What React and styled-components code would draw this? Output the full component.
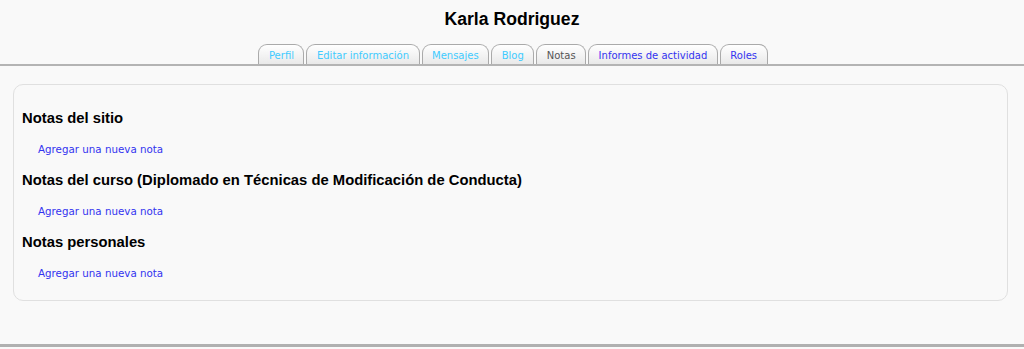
import React from "react";
import styled, { createGlobalStyle } from "styled-components";

const Global = createGlobalStyle`
  html, body { margin: 0; padding: 0; background: #f9f9f9; }
  body { font-family: "DejaVu Sans", Verdana, sans-serif; }
`;

const Page = styled.div`
  width: 1024px;
  height: 349px;
  display: flex;
  flex-direction: column;
  background: #f9f9f9;
  overflow: hidden;
`;

const Header = styled.header`
  display: flex;
  flex-direction: column;
  align-items: center;
  border-bottom: 2px solid #b4b4b4;
`;

const Title = styled.h1`
  margin: 9px 0 0;
  height: 20px;
  line-height: 20px;
  font-family: "Liberation Sans", Arial, sans-serif;
  font-size: 17.6px;
  font-weight: bold;
  color: #000;
`;

const Tabs = styled.nav`
  display: flex;
  gap: 2px;
  margin-top: 15px;
  margin-left: 2px;
`;

const Tab = styled.a`
  display: block;
  height: 19px;
  line-height: 21px;
  padding: 0 9.5px;
  border: 1px solid #aaa;
  border-bottom: none;
  border-radius: 9px 9px 0 0;
  background: linear-gradient(#ffffff, #e9e9e9);
  font-size: 10px;
  text-decoration: none;
  color: ${(p) => p.$color};
  cursor: pointer;
`;

const Main = styled.main`
  flex: 1;
  padding: 18px 16px 0 13px;
`;

const Box = styled.section`
  height: 217px;
  box-sizing: border-box;
  border: 1px solid #e0e0e0;
  border-radius: 10px;
  background: #f9f9f9;
  padding: 24px 8px 0 8px;
  display: flex;
  flex-direction: column;
`;

const Heading = styled.h2`
  margin: 0;
  height: 18px;
  line-height: 18px;
  font-family: "Liberation Sans", Arial, sans-serif;
  font-size: 14.8px;
  font-weight: bold;
  color: #000;
`;

const NoteLink = styled.a`
  display: block;
  margin: 16px 0 0 16px;
  height: 13px;
  line-height: 13px;
  font-size: 10.3px;
  color: #3333f0;
  text-decoration: none;
  & + h2 { margin-top: 15px; }
`;

const Footer = styled.footer`
  height: 2px;
  margin-top: 1px;
  border-top: 3px solid #b0b0b0;
`;

const tabs = [
  { label: "Perfil", color: "#3fcbff" },
  { label: "Editar información", color: "#3fcbff" },
  { label: "Mensajes", color: "#3fcbff" },
  { label: "Blog", color: "#3fcbff" },
  { label: "Notas", color: "#555555" },
  { label: "Informes de actividad", color: "#3333f0" },
  { label: "Roles", color: "#3333f0" },
];

const sections = [
  "Notas del sitio",
  "Notas del curso (Diplomado en Técnicas de Modificación de Conducta)",
  "Notas personales",
];

export default function App() {
  return (
    <>
      <Global />
      <Page>
        <Header>
          <Title>Karla Rodriguez</Title>
          <Tabs>
            {tabs.map((t) => (
              <Tab key={t.label} $color={t.color}>
                {t.label}
              </Tab>
            ))}
          </Tabs>
        </Header>
        <Main>
          <Box>
            {sections.map((s) => (
              <React.Fragment key={s}>
                <Heading>{s}</Heading>
                <NoteLink>Agregar una nueva nota</NoteLink>
              </React.Fragment>
            ))}
          </Box>
        </Main>
        <Footer />
      </Page>
    </>
  );
}
